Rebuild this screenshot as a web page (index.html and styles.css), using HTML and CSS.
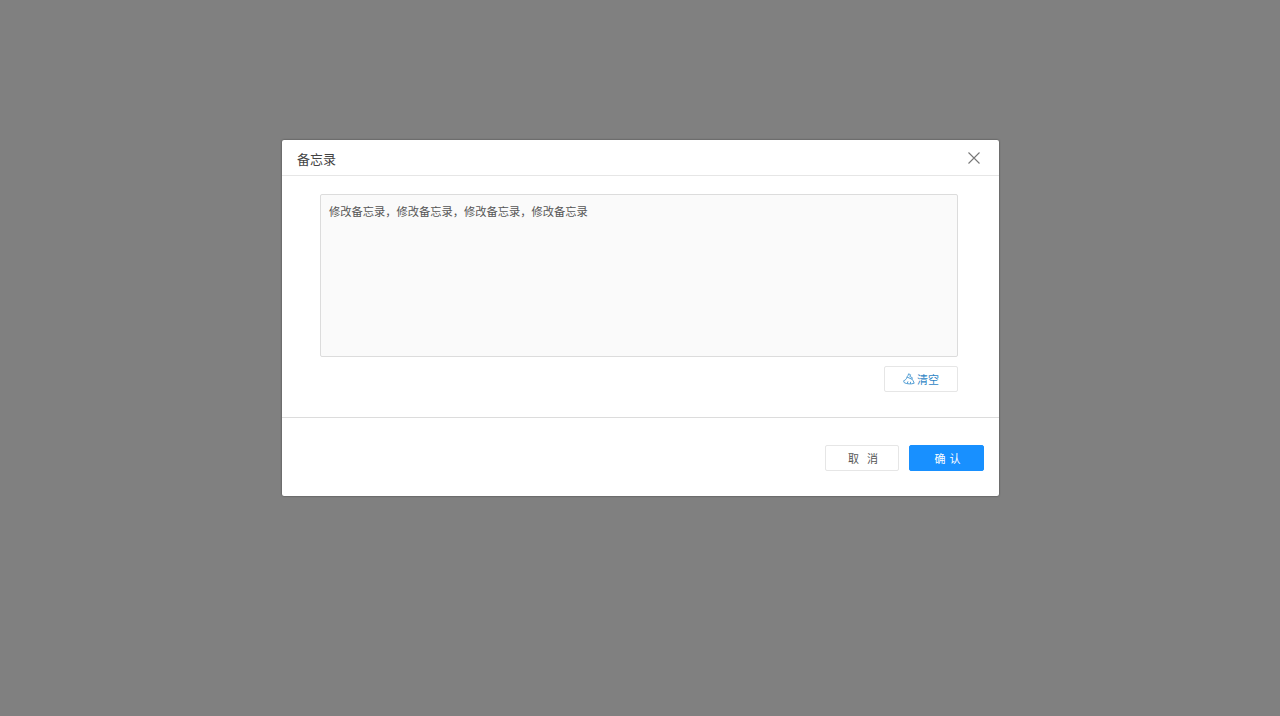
FILE: index.html
```html
<!DOCTYPE html>
<html>

<head>
  <meta charset="UTF-8">
  <title>备忘录</title>
  <link rel="stylesheet" href="styles.css">
</head>

<body>
  <div class="modal-mask">
    <div class="modal">
      <div class="modal-header">
        <span class="modal-title">备忘录</span>
        <button class="modal-close" aria-label="关闭">
          <svg width="12" height="12" viewBox="0 0 12 12">
            <path d="M0.5 0.5L11.5 11.5M11.5 0.5L0.5 11.5" stroke="#777" stroke-width="1.1" fill="none" />
          </svg>
        </button>
      </div>

      <div class="modal-body">
        <textarea class="memo-input">修改备忘录，修改备忘录，修改备忘录，修改备忘录</textarea>
        <div class="memo-actions">
          <button class="btn btn-clear">
            <!-- 扫把图标 -->
            <svg class="icon-clear" width="12" height="12" viewBox="0 0 12 12">
              <path d="M5.6 0.8L7.6 1.8L6.8 3.4L9.4 4.8L8.8 6C9.8 7 10.6 8.4 11.2 10.2C8 11.4 4.4 11 1.4 9.8C0.8 9.2 0.6 8.4 0.8 7.6C2.2 7.4 3.6 6 4.2 3.6L5 2.6Z" stroke="#3f93cf" stroke-width="0.9" fill="none" />
              <path d="M4 4L8.8 6.2M4.2 10.4L5 8.4M7.4 10.8L7.6 8.8" stroke="#3f93cf" stroke-width="0.9" fill="none" />
            </svg>
            清空
          </button>
        </div>
      </div>

      <div class="modal-footer">
        <button class="btn btn-cancel">取 消</button>
        <button class="btn btn-primary">确 认</button>
      </div>
    </div>
  </div>
</body>

</html>
```

FILE: styles.css
```css
* {
  margin: 0;
  padding: 0;
  box-sizing: border-box;
}

body {
  font-family: "Liberation Sans", "Noto Sans CJK SC", sans-serif;
  height: 100vh;
  overflow: hidden;
  background: #808080;
}

/* 遮罩层 */
.modal-mask {
  height: 100%;
  padding-top: 140px;
  display: flex;
  justify-content: flex-start;
  align-items: flex-start;
  padding-left: 282px;
}

.modal {
  width: 717px;
  height: 356px;
  background: white;
  border-radius: 2px;
  box-shadow: 0 0 2px rgba(0, 0, 0, 0.55);
  display: flex;
  flex-direction: column;
}

/* 顶部标题 */
.modal-header {
  height: 36px;
  padding: 2px 19px 0 15px;
  border-bottom: 1px solid #e6e6e6;
  display: flex;
  justify-content: space-between;
  align-items: center;
}

.modal-title {
  font-size: 13px;
  color: #444;
}

.modal-close {
  width: 12px;
  height: 12px;
  border: none;
  background: none;
  display: flex;
  margin-top: -1px;
}

/* 内容区域 */
.modal-body {
  height: 242px;
  padding: 18px 41px 0 38px;
  border-bottom: 1px solid #dcdcdc;
}

.memo-input {
  display: block;
  width: 100%;
  height: 163px;
  padding: 9px 8px;
  border: 1px solid #dcdcdc;
  border-radius: 2px;
  background: #fafafa;
  font-family: inherit;
  font-size: 11.25px;
  line-height: 16px;
  color: #555;
  resize: none;
  outline: none;
}

.memo-actions {
  margin-top: 9px;
  display: flex;
  justify-content: flex-end;
}

.btn {
  width: 74px;
  height: 26px;
  border: 1px solid #e6e6e6;
  border-radius: 2px;
  background: white;
  font-family: inherit;
  font-size: 11px;
  cursor: pointer;
}

.btn-clear {
  display: flex;
  justify-content: center;
  align-items: center;
  gap: 2px;
  color: #2f86c5;
}

.icon-clear {
  flex-shrink: 0;
}

/* 底部按钮 */
.modal-footer {
  padding: 27px 15px 0 0;
  display: flex;
  justify-content: flex-end;
  gap: 10px;
}

.btn-cancel {
  padding-left: 2px;
  color: #555;
  word-spacing: 5px;
}

.btn-primary {
  width: 75px;
  padding-left: 2px;
  background: #1890ff;
  border-color: #1890ff;
  color: white;
  word-spacing: 1px;
}
```
